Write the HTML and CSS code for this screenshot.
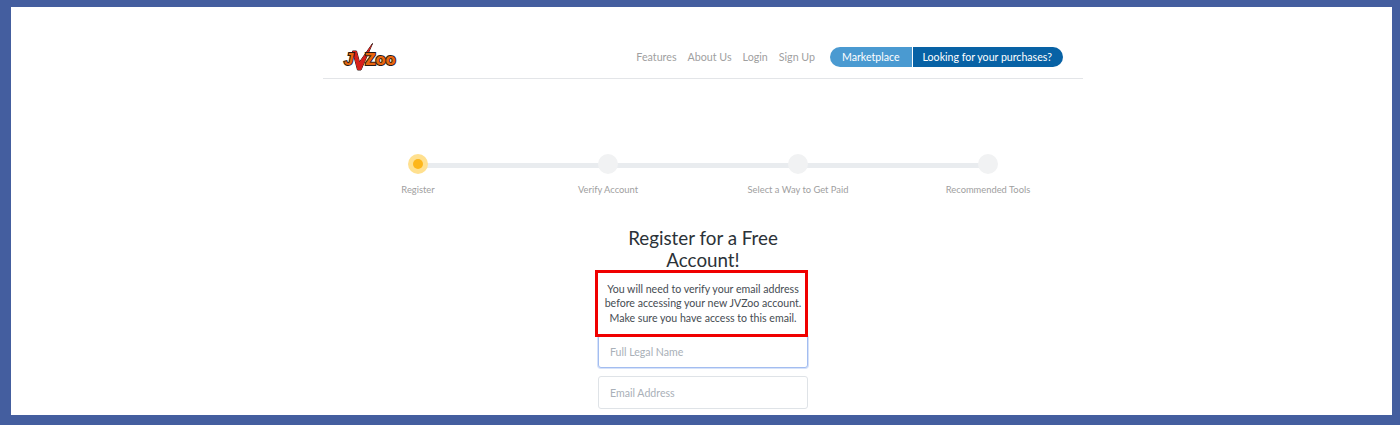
FILE: index.html
```html
<!DOCTYPE html>
<html lang="en">
<head>
  <meta charset="UTF-8">
  <meta name="viewport" content="width=device-width, initial-scale=1.0">
  <title>Register</title>
  <link rel="stylesheet" href="styles.css">
</head>
<body>

  <div class="frame">
    <div class="container">

      <!-- Top bar -->
      <div class="header">
        <a class="logo" href="#">
          <svg class="logo-slash" width="22" height="28" viewBox="0 0 22 28">
            <path d="M0.5 8 L4.5 8 L7.5 19 L20.5 0.5 L9 27 L5.5 27 Z" fill="#d8201a" stroke="#2a1512" stroke-width="1"/>
          </svg>
          <span class="logo-j">J</span><span class="logo-zoo">Zoo</span>
        </a>
        <div class="nav">
          <a href="#">Features</a>
          <a href="#">About Us</a>
          <a href="#">Login</a>
          <a href="#">Sign Up</a>
          <div class="btn-group">
            <a class="btn-light" href="#">Marketplace</a>
            <a class="btn-dark" href="#">Looking for your purchases?</a>
          </div>
        </div>
      </div>

      <!-- Steps -->
      <div class="steps">
        <div class="step active"><span class="dot"></span><span class="step-label">Register</span></div>
        <div class="step"><span class="dot"></span><span class="step-label">Verify Account</span></div>
        <div class="step"><span class="dot"></span><span class="step-label">Select a Way to Get Paid</span></div>
        <div class="step"><span class="dot"></span><span class="step-label">Recommended Tools</span></div>
      </div>

      <!-- Form -->
      <div class="form">
        <h2>Register for a Free Account!</h2>
        <p class="notice">You will need to verify your email address<br>before accessing your new JVZoo account.<br>Make sure you have access to this email.</p>
        <input type="text" class="input-field focused" placeholder="Full Legal Name">
        <input type="email" class="input-field" placeholder="Email Address">
      </div>

    </div>
  </div>

</body>
</html>
```

FILE: styles.css
```css
* {
  box-sizing: border-box;
}
html, body {
  margin: 0;
  padding: 0;
}
body {
  font-family: Lato, Arial, sans-serif;
  background: #fff;
  height: 425px;
  overflow: hidden;
}
a {
  text-decoration: none;
}
.frame {
  height: 425px;
  border-style: solid;
  border-color: #445e9f;
  border-width: 7px 8px 10px 11px;
  background: #fff;
  overflow: hidden;
}
.container {
  width: 760px;
  margin-left: 312px;
}
.header {
  display: flex;
  justify-content: space-between;
  align-items: center;
  height: 72px;
  padding: 30px 20px 0 21px;
  border-bottom: 1px solid #e3e5e8;
}
.logo {
  display: flex;
  align-items: center;
  position: relative;
  height: 30px;
  width: 54px;
  padding-top: 4px;
  font-family: "DejaVu Sans", Arial, sans-serif;
  font-weight: 700;
  font-size: 15px;
  color: #e8660f;
  -webkit-text-stroke: 2px #2a1a14;
  paint-order: stroke fill;
}
.logo-slash {
  position: absolute;
  left: 8px;
  top: 0;
}
.logo-j {
  position: relative;
  width: 21px;
  font-family: "Liberation Sans", Arial, sans-serif;
  font-size: 17px;
  font-style: italic;
}
.logo-zoo {
  position: relative;
  letter-spacing: -0.3px;
}
.nav {
  display: flex;
  align-items: center;
  gap: 11px;
  font-size: 10.7px;
  margin-top: -2px;
}
.nav > a {
  color: #a0a0a0;
}
.btn-group {
  display: flex;
  margin-left: 4px;
  height: 20px;
  line-height: 20px;
  font-size: 10.6px;
}
.btn-group a {
  color: #fff;
}
.btn-light {
  background: #4a9ad1;
  padding: 0 12px;
  border-radius: 10px 0 0 10px;
}
.btn-dark {
  background: #0862a5;
  padding: 0 11px 0 10px;
  border-radius: 0 10px 10px 0;
  margin-left: 1px;
}
.steps {
  display: grid;
  grid-template-columns: repeat(4, 1fr);
  margin-top: 75px;
}
.step {
  display: flex;
  flex-direction: column;
  align-items: center;
  position: relative;
}
.step:not(:last-child)::after {
  content: "";
  position: absolute;
  left: 50%;
  width: 100%;
  top: 9px;
  height: 5px;
  background: #e9ecef;
}
.dot {
  position: relative;
  z-index: 1;
  width: 20px;
  height: 20px;
  border-radius: 50%;
  background: #f1f2f3;
}
.step.active .dot {
  background: #ffe08f;
}
.step.active .dot::after {
  content: "";
  position: absolute;
  left: 5px;
  top: 5px;
  width: 10px;
  height: 10px;
  border-radius: 50%;
  background: #fdb61b;
}
.step-label {
  margin-top: 9px;
  font-size: 9.35px;
  line-height: 13px;
  color: #a0a0a0;
}
.form {
  width: 210px;
  margin: 31px 0 0 275px;
  text-align: center;
}
h2 {
  margin: 0;
  font-size: 18.8px;
  font-weight: 400;
  line-height: 22px;
  color: #2b3238;
}
.notice {
  position: relative;
  z-index: 1;
  width: 213px;
  height: 67px;
  margin: -1px 0 -2px -3px;
  padding: 8.5px 0 0 3px;
  border: 3px solid #f00000;
  background: #fff;
  font-size: 10.6px;
  line-height: 14.5px;
  white-space: nowrap;
  color: #464c52;
}
.input-field {
  display: block;
  width: 100%;
  height: 33px;
  padding: 0 11px;
  margin-bottom: 8px;
  border: 1px solid #dfe3e7;
  border-radius: 3px;
  background: #fff;
  font-family: Lato, Arial, sans-serif;
  font-size: 10.6px;
  outline: none;
}
.input-field::placeholder {
  color: #a9b0b8;
  opacity: 1;
}
.input-field.focused {
  border-color: #a3bdf0;
  box-shadow: 0 0 0 1px #d6e2fa;
}
```
